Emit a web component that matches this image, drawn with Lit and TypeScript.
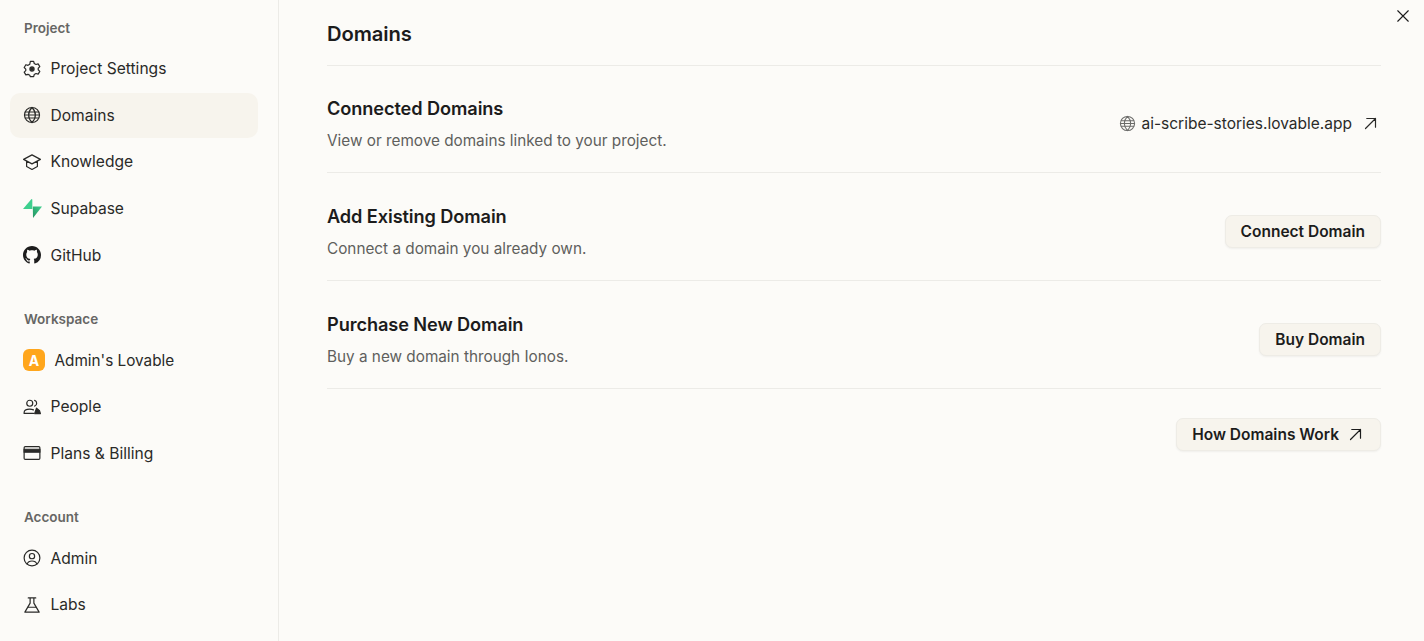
import { LitElement, html, css, svg } from "lit";
import { customElement } from "lit/decorators.js";

const ic = (body: unknown, size = 18, sw = 1.6) => html`<svg class="ic" width=${size} height=${size} viewBox="0 0 24 24" fill="none" stroke="currentColor" stroke-width=${sw} stroke-linecap="round" stroke-linejoin="round">${body}</svg>`;

const globe = svg`<circle cx="12" cy="12" r="10"/><path d="M2 12h20M3.200 8h17.600M3.200 16h17.600M12 2c-6 6-6 14 0 20M12 2c6 6 6 14 0 20"/>`;
const gear = svg`<path d="M9.800 1.800h4.400l.8 2.900 2.300 1.300 2.900-.8 2.200 3.700-2.100 2.100v2l2.100 2.100-2.200 3.700-2.900-.8-2.300 1.300-.8 2.900H9.800L9 20.400l-2.300-1.300-2.900.8-2.200-3.700 2.100-2.100v-2L1.600 10l2.200-3.700 2.900.8L9 5.800z"/><circle cx="12" cy="12" r="2.800" fill="currentColor"/>`;
const cap = svg`<path d="M12 2.500 .8 8.500 12 14.500 23.200 8.500zM4.800 10.700v7.300L12 22l7.200-4v-7.300"/>`;
const people = svg`<circle cx="9" cy="7" r="4"/><path d="M1.500 20.500v-1.200c0-2.800 2.800-4.500 7.500-4.500 2 0 3.600.3 4.900 1M1.500 20.500h12.500M15.500 3.200a4 4 0 0 1 0 7.600"/><path d="M18 13.500l4 3.500 1.200 3.800H15.500z" fill="currentColor"/>`;
const card = svg`<rect x="1.500" y="3.500" width="21" height="17" rx="1.500"/><path d="M1.500 7h21v4h-21z" fill="currentColor"/>`;
const user = svg`<circle cx="12" cy="12" r="10.500"/><circle cx="12" cy="9.500" r="3.500"/><path d="M5.500 20c1-2.800 3.500-4 6.500-4s5.500 1.200 6.500 4"/>`;
const flask = svg`<path d="M7 2.500h10M9.500 2.500v7L2.500 21.500h19L14.500 9.500v-7"/><path d="M6.500 15h11"/>`;
const arrow = svg`<path d="M4 20 20 4M6 4h14v14"/>`;
const close = svg`<path d="M5 5l14 14M19 5 5 19"/>`;
const supabase = html`<svg class="ic sb" width="19" height="19" viewBox="0 0 19 19"><defs><linearGradient id="sbg" x1="0" y1="1" x2="1" y2="0"><stop offset="0" stop-color="#249361"/><stop offset="1" stop-color="#3ecf8e"/></linearGradient></defs><path d="M8.500 0 0 10h9.300V0.500z" fill="#3ecf8e"/><path d="M10 19 19 7.500H9.800z" fill="url(#sbg)"/></svg>`;
const github = html`<svg class="ic" width="18" height="18" viewBox="0 0 16 16" fill="#1c1c1c"><path d="M8 0C3.580 0 0 3.580 0 8c0 3.540 2.290 6.530 5.470 7.590.4.070.55-.17.55-.38 0-.19-.01-.82-.01-1.490-2.010.37-2.530-.49-2.690-.94-.09-.23-.48-.94-.82-1.130-.28-.15-.68-.52-.01-.53.63-.01 1.080.58 1.230.82.720 1.210 1.870.87 2.330.66.070-.52.280-.87.510-1.070-1.780-.2-3.640-.89-3.640-3.950 0-.87.310-1.590.820-2.150-.08-.2-.36-1.020.08-2.120 0 0 .67-.21 2.200.82.640-.18 1.320-.27 2-.27s1.360.09 2 .27c1.530-1.040 2.200-.82 2.200-.82.440 1.100.160 1.920.080 2.120.510.560.820 1.270.820 2.150 0 3.070-1.870 3.750-3.650 3.950.290.250.540.730.540 1.480 0 1.070-.010 1.930-.010 2.200 0 .210.150.460.550.380A8.010 8.010 0 0 0 16 8c0-4.420-3.580-8-8-8z"/></svg>`;

@customElement("app-root")
export class AppRoot extends LitElement {
  static styles = css`
    :host { display: block; height: 641px; overflow: hidden; background: #fcfbf8; color: #1c1c1c; font-family: Inter, "Liberation Sans", sans-serif; }
    .shell { display: grid; grid-template-columns: 279px 1fr; height: 641px; position: relative; }
    .side { border-right: 1px solid #ecebe7; padding: 18px 20px 0 10px; display: flex; flex-direction: column; }
    .label { font-size: 13.500px; font-weight: 600; line-height: 20px; color: #666664; padding-left: 14px; margin-bottom: 8.400px; }
    .group { display: flex; flex-direction: column; gap: 2px; margin-bottom: 31.750px; }
    .group.mid { margin-bottom: 31.800px; }
    .item { display: flex; align-items: center; gap: 9.500px; height: 44.650px; padding-left: 13px; border-radius: 10px; font-size: 15.600px; color: #2a2a28; }
    .item.active { background: #f7f4ed; }
    .item.ws { font-size: 15.300px; }
    .iconbox { width: 18px; height: 18px; display: flex; align-items: center; justify-content: center; }
    .ic { display: block; flex: none; }
    .avatar { width: 22px; height: 22px; border-radius: 6px; background: #ffa61c; color: #fff; font-size: 14px; font-weight: 700; display: flex; align-items: center; justify-content: center; }
    .main { padding: 0 43px 0 48px; }
    h1 { margin: 0; font-size: 20.200px; font-weight: 600; line-height: 68px; height: 65px; border-bottom: 1px solid #ecebe7; color: #1c1c1c; letter-spacing: -0.100px; }
    .row { display: flex; align-items: center; justify-content: space-between; box-sizing: border-box; height: 108px; padding-top: 9px; border-bottom: 1px solid #ecebe7; }
    .row.first { height: 107px; }
    .copy { padding-top: 3px; }
    .first .copy { padding-top: 1px; }
    .row h2 { margin: 0 0 9px; font-size: 18.200px; font-weight: 600; line-height: 24px; color: #1c1c1c; letter-spacing: -0.100px; }
    .row p { margin: 0; font-size: 15.300px; line-height: 24px; color: #5f5f5d; }
    .link { display: flex; align-items: center; font-size: 15.500px; color: #2a2a28; margin: 0 3px 0 0; }
    .link .g { color: #6b6b69; margin-right: 5px; }
    .link .a { margin-left: 11px; }
    .btn { display: inline-flex; align-items: center; height: 33px; box-sizing: border-box; padding: 0 15px; border-radius: 7px; background: #f7f4ed; border: 1px solid #eeece6; box-shadow: 0 1px 2px rgba(0,0,0,.05); font-size: 15.500px; font-weight: 600; color: #1c1c1c; white-space: nowrap; }
    .foot { display: flex; justify-content: flex-end; padding-top: 29px; }
    .foot .btn { padding-right: 17px; }
    .foot .a { margin-left: 9px; }
    .close { position: absolute; top: 6.500px; right: 12.500px; color: #1c1c1c; }
  `;

  private item(icon: unknown, text: string, active = false) {
    return html`<div class="item ${active ? "active" : ""}"><span class="iconbox">${icon}</span><span>${text}</span></div>`;
  }

  render() {
    return html`<div class="shell">
      <aside class="side">
        <div class="label">Project</div>
        <div class="group">
          ${this.item(ic(gear), "Project Settings")}
          ${this.item(ic(globe), "Domains", true)}
          ${this.item(ic(cap), "Knowledge")}
          ${this.item(supabase, "Supabase")}
          ${this.item(github, "GitHub")}
        </div>
        <div class="label">Workspace</div>
        <div class="group mid">
          <div class="item ws"><span class="avatar">A</span><span>Admin's Lovable</span></div>
          ${this.item(ic(people), "People")}
          ${this.item(ic(card), "Plans & Billing")}
        </div>
        <div class="label">Account</div>
        <div class="group">
          ${this.item(ic(user), "Admin")}
          ${this.item(ic(flask), "Labs")}
        </div>
      </aside>
      <main class="main">
        <h1>Domains</h1>
        <section class="row first">
          <div class="copy"><h2>Connected Domains</h2><p>View or remove domains linked to your project.</p></div>
          <div class="link"><span class="g">${ic(globe, 17, 1.5)}</span><span>ai-scribe-stories.lovable.app</span><span class="a">${ic(arrow, 15, 1.900)}</span></div>
        </section>
        <section class="row">
          <div class="copy"><h2>Add Existing Domain</h2><p>Connect a domain you already own.</p></div>
          <div class="btn">Connect Domain</div>
        </section>
        <section class="row">
          <div class="copy"><h2>Purchase New Domain</h2><p>Buy a new domain through Ionos.</p></div>
          <div class="btn">Buy Domain</div>
        </section>
        <div class="foot"><div class="btn">How Domains Work<span class="a">${ic(arrow, 15, 1.900)}</span></div></div>
      </main>
      <div class="close">${ic(close, 18, 1.500)}</div>
    </div>`;
  }
}
